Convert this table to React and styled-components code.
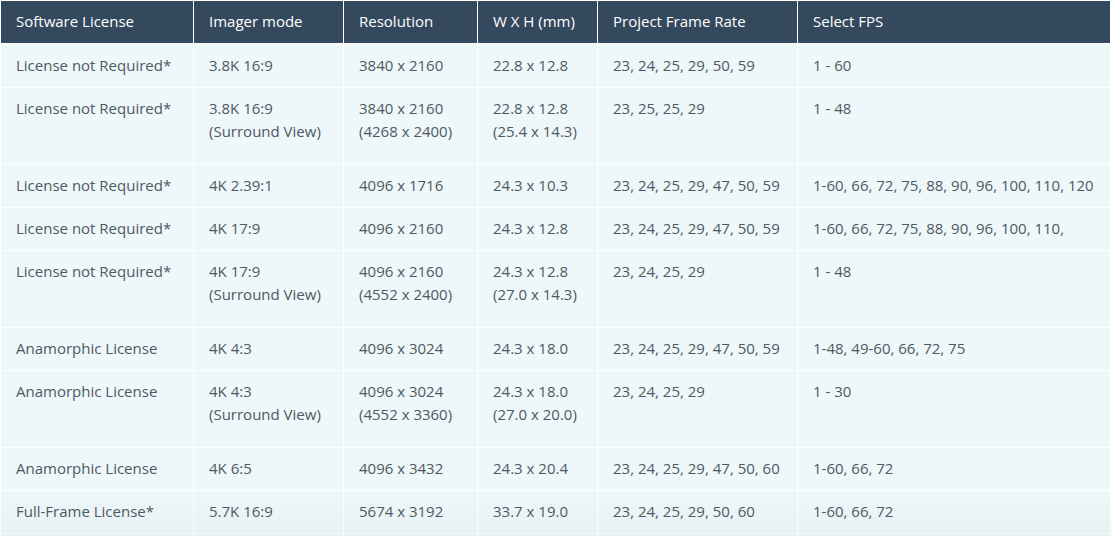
import React from "react";
import styled, { createGlobalStyle } from "styled-components";

const Global = createGlobalStyle`
  html, body { margin: 0; padding: 0; background: #ffffff; }
  body { font-family: "Open Sans", "Noto Sans", sans-serif; }
`;

const COLS = "192px 149px 133px 119px 199px 312px";

const Table = styled.div`
  width: 1112px;
  height: 536px;
  box-sizing: border-box;
  padding: 1px 2px 0 1px;
  background: #ffffff;
  display: flex;
  flex-direction: column;
  gap: 1px;
  overflow: hidden;
  position: relative;
`;

const Row = styled.div`
  display: grid;
  grid-template-columns: ${COLS};
  column-gap: 1px;
  height: ${(p) => p.$h}px;
  flex: none;
`;

const HeadCell = styled.div`
  background: #34495e;
  color: #ffffff;
  font-size: 15px;
  line-height: 23px;
  padding: 0 0 1px 15px;
  display: flex;
  align-items: center;
  white-space: nowrap;
`;

const Cell = styled.div`
  background: #eef7f9;
  color: #4f5964;
  font-size: 15px;
  line-height: 23px;
  padding: ${(p) => p.$pt}px 0 0 15px;
  white-space: nowrap;
`;

const Fade = styled.div`
  position: absolute;
  left: 0;
  right: 0;
  bottom: 0;
  height: 50px;
  pointer-events: none;
  background: linear-gradient(to bottom, rgba(60, 90, 100, 0) 0%, rgba(60, 90, 100, 0.035) 100%);
`;

const head = ["Software License", "Imager mode", "Resolution", "W X H (mm)", "Project Frame Rate", "Select FPS"];

const rows = [
  [["License not Required*"], ["3.8K 16:9"], ["3840 x 2160"], ["22.8 x 12.8"], ["23, 24, 25, 29, 50, 59"], ["1 - 60"]],
  [["License not Required*"], ["3.8K 16:9", "(Surround View)"], ["3840 x 2160", "(4268 x 2400)"], ["22.8 x 12.8", "(25.4 x 14.3)"], ["23, 25, 25, 29"], ["1 - 48"]],
  [["License not Required*"], ["4K 2.39:1"], ["4096 x 1716"], ["24.3 x 10.3"], ["23, 24, 25, 29, 47, 50, 59"], ["1-60, 66, 72, 75, 88, 90, 96, 100, 110, 120"]],
  [["License not Required*"], ["4K 17:9"], ["4096 x 2160"], ["24.3 x 12.8"], ["23, 24, 25, 29, 47, 50, 59"], ["1-60, 66, 72, 75, 88, 90, 96, 100, 110,"]],
  [["License not Required*"], ["4K 17:9", "(Surround View)"], ["4096 x 2160", "(4552 x 2400)"], ["24.3 x 12.8", "(27.0 x 14.3)"], ["23, 24, 25, 29"], ["1 - 48"]],
  [["Anamorphic License"], ["4K 4:3"], ["4096 x 3024"], ["24.3 x 18.0"], ["23, 24, 25, 29, 47, 50, 59"], ["1-48, 49-60, 66, 72, 75"]],
  [["Anamorphic License"], ["4K 4:3", "(Surround View)"], ["4096 x 3024", "(4552 x 3360)"], ["24.3 x 18.0", "(27.0 x 20.0)"], ["23, 24, 25, 29"], ["1 - 30"]],
  [["Anamorphic License"], ["4K 6:5"], ["4096 x 3432"], ["24.3 x 20.4"], ["23, 24, 25, 29, 47, 50, 60"], ["1-60, 66, 72"]],
  [["Full-Frame License*"], ["5.7K 16:9"], ["5674 x 3192"], ["33.7 x 19.0"], ["23, 24, 25, 29, 50, 60"], ["1-60, 66, 72"]],
];

export default function App() {
  return (
    <>
      <Global />
      <Table>
        <Row $h={42}>
          {head.map((h) => (
            <HeadCell key={h}>{h}</HeadCell>
          ))}
        </Row>
        {rows.map((r, i) => {
          const tall = r.some((c) => c.length > 1);
          const h = tall ? 76 : i === 0 ? 43 : 42;
          const pt = i === 0 ? 10 : 9;
          return (
            <Row key={i} $h={h}>
              {r.map((c, j) => (
                <Cell key={j} $pt={pt}>
                  {c.map((line, k) => (
                    <div key={k}>{line}</div>
                  ))}
                </Cell>
              ))}
            </Row>
          );
        })}
        <Row $h={10}>
          {head.map((h) => (
            <Cell key={h} $pt={0} />
          ))}
        </Row>
        <Fade />
      </Table>
    </>
  );
}
